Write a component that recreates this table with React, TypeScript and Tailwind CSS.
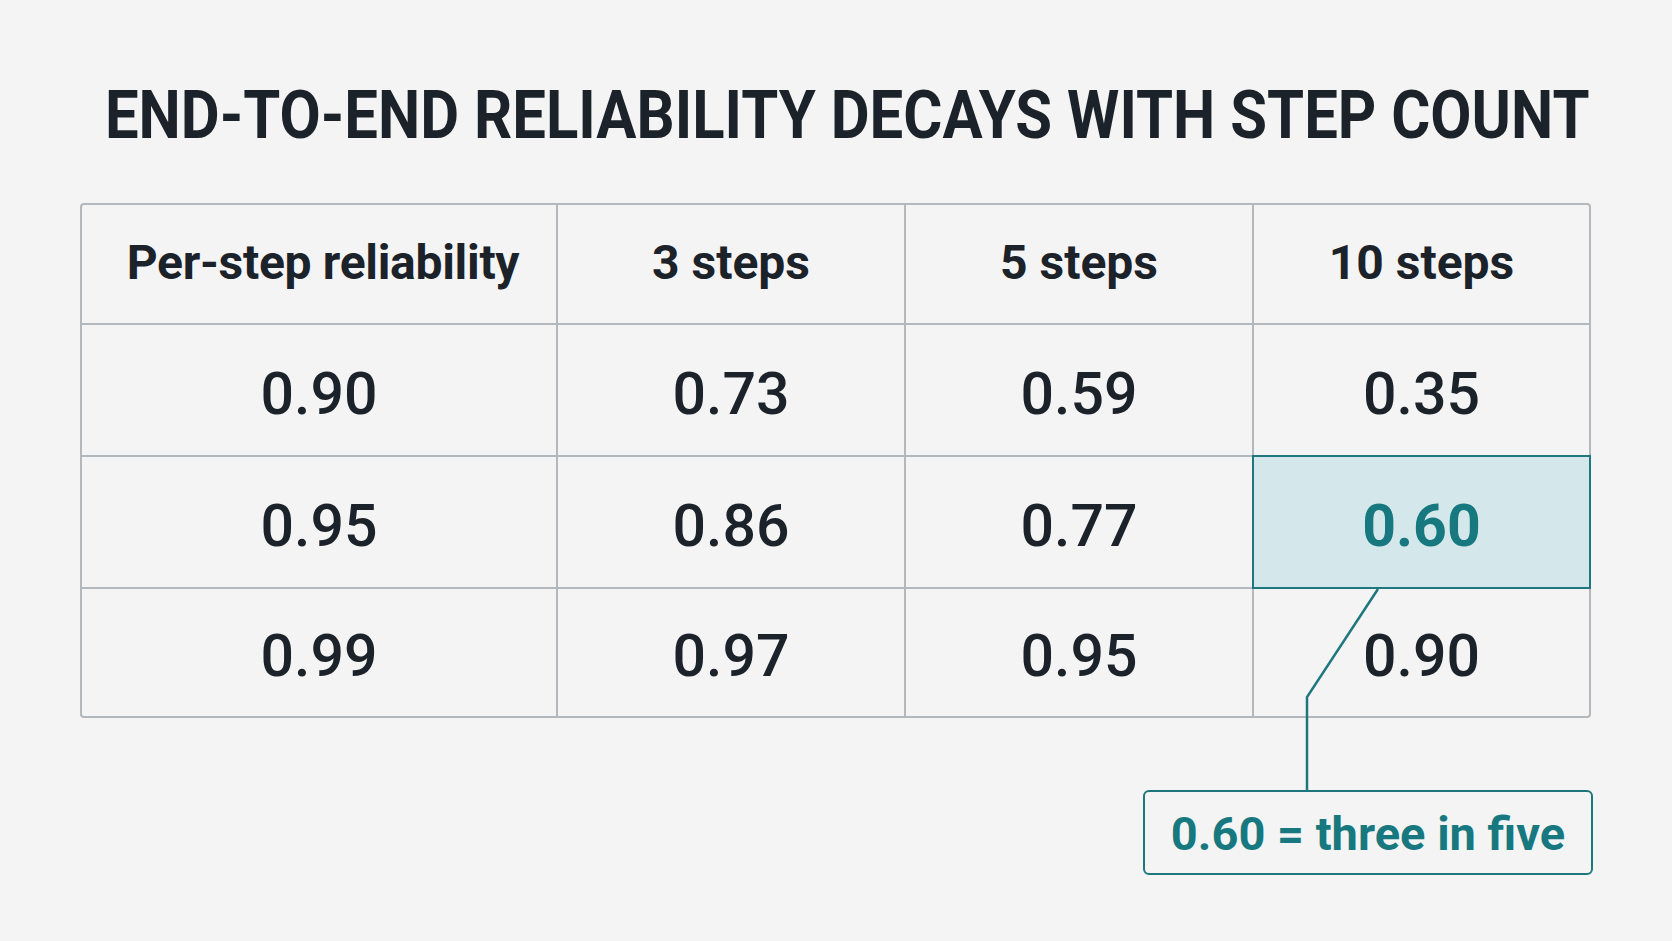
import React from "react";

const rows = [
  ["0.90", "0.73", "0.59", "0.35"],
  ["0.95", "0.86", "0.77", "0.60"],
  ["0.99", "0.97", "0.95", "0.90"],
];

const headers = ["Per-step reliability", "3 steps", "5 steps", "10 steps"];
const widths = ["w-[476px]", "w-[348px]", "w-[348px]", "w-[335px]"];

export default function App() {
  return (
    <div
      className="w-[1672px] h-[941px] bg-[#f4f4f4] text-[#1b2229] overflow-hidden"
      style={{ fontFamily: "Roboto, 'Liberation Sans', sans-serif" }}
    >
      <div className="mt-[82px] h-[67px] flex justify-center pl-[22px]">
        <h1 className="inline-block text-[67px] leading-[67px] font-bold tracking-[0px] scale-x-[0.893] origin-center whitespace-nowrap">
          END-TO-END RELIABILITY DECAYS WITH STEP COUNT
        </h1>
      </div>

      <div className="relative ml-[80px] mt-[54px] w-[1513px]">
        <div className="w-[1511px] border-2 border-[#b3b8bd] rounded-[4px] flex flex-col">
          <div className="flex h-[120px] border-b-2 border-[#b3b8bd]">
            {headers.map((h, i) => (
              <div
                key={h}
                className={`${widths[i]} ${i < 3 ? "border-r-2 border-[#b3b8bd]" : ""} flex items-center justify-center text-[48px] leading-none font-bold pb-[2px] ${i === 0 ? "pl-[8px]" : ""}`}
              >
                {i === 0 ? <span className="inline-block tracking-[-0.3px]">{h}</span> : h}
              </div>
            ))}
          </div>
          {rows.map((r, ri) => (
            <div
              key={ri}
              className={`flex ${ri < 2 ? "h-[132px] border-b-2 border-[#b3b8bd]" : "h-[127px]"}`}
            >
              {r.map((v, ci) => {
                const hl = ri === 1 && ci === 3;
                return (
                  <div
                    key={ci}
                    className={`${widths[ci]} relative ${ci < 3 ? "border-r-2 border-[#b3b8bd]" : ""} ${hl ? "bg-[#d4e8eb] text-[#17797f] font-bold" : "font-medium"} flex items-center justify-center text-[59px] leading-none pt-[6px]`}
                  >
                    {hl && (
                      <div className="absolute -left-[2px] -top-[2px] -right-[2px] -bottom-[2px] border-2 border-[#1d777d]" />
                    )}
                    <span className="relative">{v}</span>
                  </div>
                );
              })}
            </div>
          ))}
        </div>

        <svg
          className="absolute left-0 top-0 pointer-events-none"
          width="1513"
          height="600"
          viewBox="0 0 1513 600"
        >
          <polyline
            points="1298,386 1227,494 1227,588"
            fill="none"
            stroke="#1d777d"
            strokeWidth="2.5"
          />
        </svg>

        <div className="mt-[72px] ml-[1063px] w-[450px] h-[85px] border-2 border-[#1d777d] rounded-[6px] flex items-center justify-center text-[#17797f] text-[47px] leading-none font-bold pt-[2px]">
          0.60 = three in five
        </div>
      </div>
    </div>
  );
}
